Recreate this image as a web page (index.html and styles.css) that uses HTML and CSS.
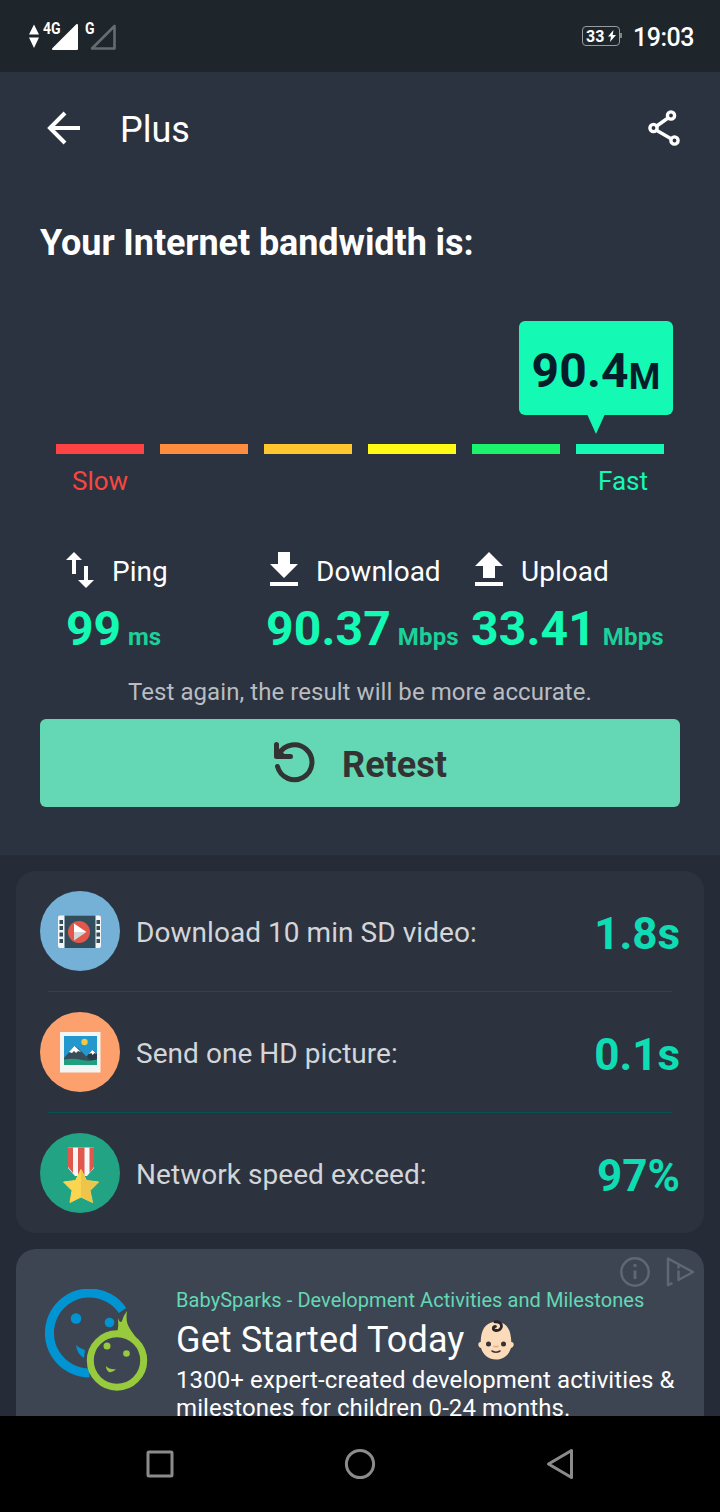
FILE: index.html
```html
<!DOCTYPE html>
<html lang="en">
<head>
<meta charset="utf-8">
<title>Plus</title>
<link rel="stylesheet" href="styles.css">
</head>
<body>
<div class="screen">
  <header class="status">
    <svg class="updown" width="10" height="26" viewBox="0 0 10 26"><path d="M5 .5 10 10.500H0ZM0 13.500h10L5 24Z" fill="#fff"/></svg>
    <span class="net net-4g">4G</span>
    <svg class="signal" width="28" height="28" viewBox="0 0 28 28"><path d="M26 2v24H2Z" fill="#fff" stroke="#fff" stroke-width="2" stroke-linejoin="round"/></svg>
    <span class="net net-g">G</span>
    <svg class="signal" width="28" height="28" viewBox="0 0 28 28"><path d="M25.500 3v22.500H3Z" fill="none" stroke="#666c70" stroke-width="2.600" stroke-linejoin="round"/></svg>
    <div class="battery"><span>33</span><svg width="8" height="12" viewBox="0 0 8 12"><path d="M5.500 0 0 6.600h3L2 12 8 5H4.700Z" fill="#fff"/></svg></div>
    <i class="battery-cap"></i>
    <span class="clock">19:03</span>
  </header>

  <section class="hero">
    <div class="appbar">
      <svg width="34" height="34" viewBox="0 0 34 34" fill="none" stroke="#fff" stroke-width="4"><path d="M33 17H4M18 2 3 17l15 15"/></svg>
      <h1>Plus</h1>
      <svg class="share" width="34" height="38" viewBox="0 0 34 38" fill="none" stroke="#fff" stroke-width="3.400"><path d="M9 17.500 21 9M9 21l15.500 9"/><circle cx="6.500" cy="19" r="3.600"/><circle cx="24" cy="6.500" r="3.600"/><circle cx="27.500" cy="31.500" r="3.600"/></svg>
    </div>
    <h2 class="headline">Your Internet bandwidth is:</h2>
    <div class="bubble"><b>90.4</b><b class="bubble-unit">M</b></div>
    <svg class="bubble-tip" width="18" height="20" viewBox="0 0 18 20"><path d="M0 0h18L9 20Z" fill="#14fab4"/></svg>
    <div class="scale"><i class="s1"></i><i class="s2"></i><i class="s3"></i><i class="s4"></i><i class="s5"></i><i class="s6"></i></div>
    <div class="scale-labels"><span class="slow">Slow</span><span class="fast">Fast</span></div>
    <div class="metrics">
      <div class="metric ping">
        <div class="metric-label"><svg width="28" height="36" viewBox="0 0 28 36"><path d="M8 0l8 8h-6v14H6V8H0ZM18 14h4v14h6l-8 8-8-8h6Z" fill="#fff"/></svg><span>Ping</span></div>
        <div class="metric-value"><b>99</b><small>ms</small></div>
      </div>
      <div class="metric download">
        <div class="metric-label"><svg width="28" height="36" viewBox="0 0 28 36"><path d="M8 0h12v12h8L14 26 0 12h8ZM0 30h28v4H0Z" fill="#fff"/></svg><span>Download</span></div>
        <div class="metric-value"><b>90.37</b><small>Mbps</small></div>
      </div>
      <div class="metric upload">
        <div class="metric-label"><svg width="28" height="36" viewBox="0 0 28 36"><path d="M14 0l14 14h-8v12H8V14H0ZM0 30h28v4H0Z" fill="#fff"/></svg><span>Upload</span></div>
        <div class="metric-value"><b>33.41</b><small>Mbps</small></div>
      </div>
    </div>
    <p class="note">Test again, the result will be more accurate.</p>
    <div class="retest">
      <svg width="42" height="42" viewBox="0 0 42 42" fill="none" stroke="#333" stroke-linecap="round" stroke-linejoin="round" stroke-width="5"><path d="M4.500 25.500A17.500 17.500 0 1 0 6 13M3.500 3.500v12h14" /><path d="M3 6v10h10Z" fill="#333" stroke-width="2"/></svg>
      <b>Retest</b>
    </div>
  </section>

  <section class="results">
    <div class="row">
      <svg width="80" height="80" viewBox="0 0 80 80"><circle cx="40" cy="40" r="40" fill="#75b0d6"/><rect x="18" y="24.500" width="43" height="32.500" rx="2" fill="#f3f5f6"/><path d="M24.500 24.500h31V57h-31Z" fill="#324d5b"/><path d="M19.500 29h3.500v4h-3.500zm0 6h3.500v4h-3.500zm0 6.500h3.500v4h-3.500zm0 6.500h3.500v4h-3.500zM56.500 29H60v4h-3.500zm0 6H60v4h-3.500zm0 6.500H60v4h-3.500zm0 6.500H60v4h-3.500z" fill="#324d5b"/><circle cx="39" cy="41" r="11" fill="#e2574c"/><path d="M34 32.500 46.500 41H34Z" fill="#fff"/><path d="M34 41h12.500L34 49.500Z" fill="#d5d5d5"/></svg>
      <span>Download 10 min SD video:</span><b>1.8s</b>
    </div>
    <div class="row">
      <svg width="80" height="80" viewBox="0 0 80 80"><circle cx="40" cy="40" r="40" fill="#fca16d"/><path d="M20 20h40.500v40.500H20Z" fill="#f3f4f4"/><path d="M24 24h33v29H24Z" fill="#2298cf"/><path d="M44 48l6-8 3-2 4 4v8H44Z" fill="#293b49"/><path d="M24 46l8-9 3-3 5 4 10 10-2 2H24Z" fill="#3a4d5a"/><path d="m29 40 5.500-6 6.500 6-3-1-2 2-2-2-2 2Zm19.500 2 4-4 4 4-2-1-2 2-1-2Z" fill="#fff"/><path d="M24 47.500q10-1.500 18 .5 8 1.500 15-.5V53H24Z" fill="#209f80"/><circle cx="44.500" cy="30" r="3.200" fill="#efc84a"/></svg>
      <span>Send one HD picture:</span><b>0.1s</b>
    </div>
    <div class="row">
      <svg width="80" height="80" viewBox="0 0 80 80"><circle cx="40" cy="40" r="40" fill="#21a384"/><path d="M28 14.500h26V35l-7 8H35l-7-8Z" fill="#f5f7f7"/><path d="M28 14.500h5V40l-5-6Zm10 0h6.500V43H38Zm11.500 0H54V34l-4.500 6Z" fill="#e2574c"/><path d="m41 36.500 5.500 11 12 1.500-8.500 8.500 2.500 12L41 64l-11 5.500 2-12L23.500 49l12-1.500Z" fill="#fbd550" stroke="#fbd550" stroke-linejoin="round"/><path d="m41 36.500 5.500 11 12 1.500-8.500 8.500 2.500 12L41 64Z" fill="#efc44a"/></svg>
      <span>Network speed exceed:</span><b>97%</b>
    </div>
  </section>

  <section class="ad">
    <svg class="ad-logo" width="104" height="104" viewBox="0 0 104 104"><path d="M77.500 21.500A40 40 0 1 0 44.500 84" fill="none" stroke="#0095d2" stroke-width="9"/><circle cx="31" cy="29.500" r="5.300" fill="#0095d2"/><circle cx="64.500" cy="33.500" r="4.800" fill="#0095d2"/><path d="M31 56q4 4 9 5l-1 8q-7-4-8-13Z" fill="#0095d2"/><circle cx="72" cy="71.500" r="26.700" fill="none" stroke="#97ca3d" stroke-width="7"/><path d="M72 45q2-8 1-16 2 6 4 3 1-5 5-10-2 11 3 18 4 6 11 15l-14-6Z" fill="#97ca3d"/><circle cx="62" cy="57" r="3.500" fill="#97ca3d"/><circle cx="81.500" cy="64.500" r="3.300" fill="#97ca3d"/><path d="M61 77q4 4 10 3-3 4-7 3-3-2-3-6Z" fill="#97ca3d"/></svg>
    <div class="ad-copy">
      <div class="ad-brand">BabySparks - Development Activities and Milestones</div>
      <div class="ad-title"><span>Get Started Today</span><svg width="36" height="40" viewBox="0 0 36 40"><path d="M18 2C7 2 3 10 2.700 22-1 22 0 28 3 28c2 7 8 11.500 15 11.500S31 35 33 28c3 0 4-6 .3-6C33 10 29 2 18 2Z" fill="#fbdbb9"/><circle cx="10.500" cy="24" r="2.500" fill="#343238"/><circle cx="25.500" cy="24" r="2.500" fill="#343238"/><path d="M15.500 26q2.500 1.500 5 0" fill="none" stroke="#e8ae93" stroke-width="1.500"/><path d="M14 31q4 2.500 8 0" fill="none" stroke="#4a3937" stroke-width="1.600" stroke-linecap="round"/><path d="M17 1.800C26 1 25 11 18 10.500c-4-.5-3-4.500-.5-4" fill="none" stroke="#292529" stroke-width="2.800" stroke-linecap="round"/></svg></div>
      <p>1300+ expert-created development activities &amp; milestones for children 0-24 months.</p>
    </div>
    <svg class="ad-info" width="78" height="32" viewBox="0 0 78 32" fill="none" stroke="#606672" stroke-width="2.500" stroke-linejoin="round" stroke-linecap="round"><circle cx="16" cy="16" r="13.700"/><path d="M16 14.500v8.500M16 8v3" stroke-width="3" stroke-linecap="butt"/><path d="M52.500 27.500l-3.500 1.500V2.500L74 16 59.500 24v-8.500M59.500 11.500v-1"/></svg>
  </section>

  <nav class="nav">
    <svg width="32" height="32" viewBox="0 0 32 32"><rect x="4" y="4" width="24" height="24" rx="1"/></svg>
    <svg width="32" height="32" viewBox="0 0 32 32"><circle cx="16" cy="16" r="13.600"/></svg>
    <svg width="32" height="32" viewBox="0 0 32 32"><path d="M27.500 2.500v27L4.500 16Z"/></svg>
  </nav>
</div>
</body>
</html>
```
FILE: styles.css
```css
* { box-sizing: border-box; }
body { margin: 0; background: #252c37; font-family: Roboto, sans-serif; color: #fff; }
svg { display: block; flex: none; }
h1, h2, p { margin: 0; }
.screen { width: 720px; height: 1512px; display: flex; flex-direction: column; overflow: hidden; }

.status { height: 72px; flex: none; display: flex; align-items: flex-start; background: #1e262b; padding: 23px 27px 0 29px; }
.updown { margin-top: 1px; }
.net { font-size: 16.500px; line-height: 18px; font-weight: 700; margin-top: -3px; transform-origin: left; }
.net-4g { width: 8px; margin-left: 4px; transform: scaleX(.85); }
.net-g { width: 4px; margin-left: 6px; transform: scaleX(.85); }
.battery { margin-left: auto; margin-top: 3px; width: 38px; height: 20px; border: 1.500px solid #989c9f; border-radius: 4px; display: flex; align-items: center; padding-left: 3px; gap: 4px; font-size: 16px; line-height: 18px; font-weight: 700; }
.battery span { padding-top: 1px; }
.battery-cap { width: 2px; height: 5px; margin-top: 10px; background: #7d8285; }
.clock { margin-left: 11px; font-size: 25px; line-height: 28px; font-weight: 500; letter-spacing: -.5px; margin-right: -1px; margin-top: 1px; }

.hero { height: 783px; flex: none; display: flex; flex-direction: column; background: #2a333f; }
.appbar { height: 112px; display: flex; align-items: center; padding: 0 39px 0 47px; }
.appbar h1 { margin-left: 39px; font-size: 36px; line-height: 42px; font-weight: 400; padding-top: 3px; }
.share { margin-left: auto; }
.headline { margin: 38px 0 0 40px; font-size: 36px; line-height: 42px; font-weight: 700; letter-spacing: -.08px; }
.bubble { margin: 57px 0 0 519px; width: 154px; height: 94px; border-radius: 6px; background: #14fab4; color: #071c2a; display: flex; align-items: baseline; justify-content: center; padding-top: 22px; font-size: 48px; line-height: 56px; letter-spacing: .2px; }
.bubble-unit { font-size: 36px; transform: translateY(2px); }
.bubble-tip { margin-left: 587px; margin-top: -1px; }
.scale { display: flex; gap: 16px; margin: 10px 56px 0; }
.scale i { flex: 1; height: 10px; }
.s1 { background: #ff4243; }
.s2 { background: #ff8d40; }
.s3 { background: #ffc62e; }
.s4 { background: #fffb14; }
.s5 { background: #1cf36d; }
.s6 { background: #14fab4; }
.scale-labels { display: flex; justify-content: space-between; padding: 0 72px 0 72px; margin-top: 11px; font-size: 26px; line-height: 32px; }
.slow { color: #f9453f; }
.fast { color: #14fab4; }
.metrics { display: grid; grid-template-columns: 204px 205px 1fr; margin: 52px 0 0 66px; }
.metric-label { display: flex; align-items: center; gap: 18px; height: 42px; font-size: 28px; line-height: 34px; }
.metric-label span { padding-top: 3px; }
.metric-value { display: flex; align-items: baseline; gap: 7px; height: 56px; line-height: 56px; margin-top: 10px; font-size: 48px; color: #14fab4; white-space: nowrap; }
.metric-value small { font-size: 24px; font-weight: 700; color: #1bd19a; }
.download .metric-value, .upload .metric-value { margin-left: -4px; letter-spacing: .15px; }
.note { margin-top: 19px; text-align: center; font-size: 24px; line-height: 32px; letter-spacing: .06px; color: #b9bcc0; }
.retest { margin: 11px 40px 0; height: 88px; border-radius: 6px; background: #64d8b5; color: #333; display: flex; align-items: center; justify-content: center; gap: 27px; font-size: 36px; line-height: 42px; }
.retest svg { margin-top: -2px; }
.retest b { padding-top: 4px; }

.results { flex: none; margin: 16px 16px 0; height: 362px; border-radius: 20px; background: #2c333f; padding: 0 24px; }
.row { height: 121px; padding-bottom: 1px; display: flex; align-items: center; gap: 16px; font-size: 28px; line-height: 34px; color: #d3d5d9; background: linear-gradient(#065158, #065158) center bottom / 624px 1px no-repeat; }
.row:first-child { background-image: linear-gradient(#2b4550, #2b4550); }
.row:last-child { background: none; }
.row span { padding-top: 3px; letter-spacing: .05px; }
.row b { margin-left: auto; font-size: 44px; line-height: 52px; color: #0fdcb3; padding-top: 5px; }

.ad { position: relative; flex: none; margin: 16px 16px 0; height: 167px; border-radius: 20px 20px 0 0; background: #3d4553; display: flex; overflow: hidden; padding: 39px 0 0 29px; gap: 27px; }
.ad-logo { margin-top: 1px; }
.ad-brand { font-size: 20px; line-height: 24px; letter-spacing: .06px; color: #64d8b5; white-space: nowrap; }
.ad-title { display: flex; align-items: center; gap: 13px; font-size: 36px; line-height: 42px; letter-spacing: .12px; margin-top: 7px; }
.ad-copy p { width: 520px; margin-top: 5px; font-size: 24px; line-height: 28px; letter-spacing: .09px; }
.ad-info { position: absolute; left: 603px; top: 7px; }

.nav { height: 96px; flex: none; background: #000; display: flex; align-items: center; justify-content: center; gap: 168px; }
.nav svg { fill: none; stroke: #8b8b8b; stroke-width: 3; stroke-linejoin: round; }
```
